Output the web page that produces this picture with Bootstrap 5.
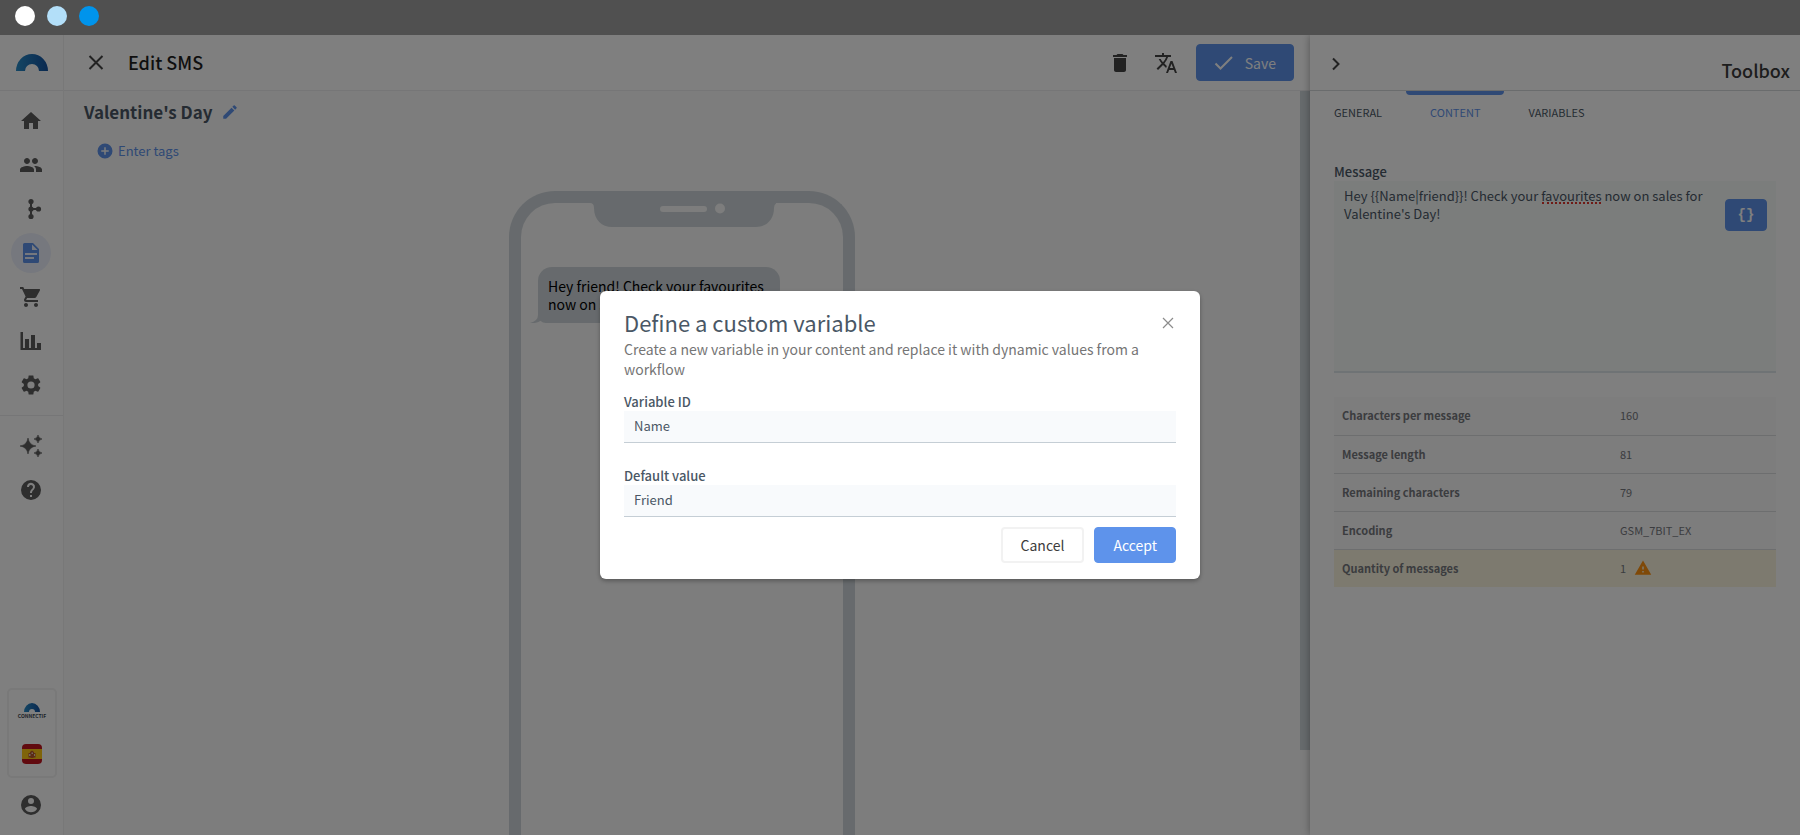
<!DOCTYPE html>
<html lang="en">
<head>
<meta charset="utf-8">
<meta name="viewport" content="width=device-width, initial-scale=1">
<title>Edit SMS</title>
<link href="https://cdn.jsdelivr.net/npm/bootstrap@5.3.0/dist/css/bootstrap.min.css" rel="stylesheet">
<style>
  :root { --brand: #5e93eb; --ink: #4a5765; --icon: #5c5c5c; --line: #ececee; --shell: #ced5da; }
  body { font-family: "Noto Sans CJK SC", "Noto Sans", sans-serif; font-size: 13px; line-height: 18px; color: var(--ink); }
  svg { display: block; fill: currentColor; }
  .window-bar { background: #505050; height: 35px; padding-left: 15px; gap: 12px; }
  .dot { width: 20px; height: 20px; border-radius: 50%; }
  .head { height: 56px; border-bottom: 1px solid var(--line); flex: none; }
  .rail { width: 64px; flex: none; border-right: 1px solid #f0f0f0; color: var(--icon); background: #fff; }
  .rail a { color: inherit; width: 40px; height: 40px; margin-right: 1px; border-radius: 50%; display: flex; align-items: center; justify-content: center; }
  .rail a.active { background: #edf1fc; color: var(--brand); }
  .rail-list { gap: 4px; padding: 10px 0; }
  .rail-more { border-top: 1px solid var(--line); }
  .account-box { width: 50px; height: 90px; border: 2px solid #f2f2f2; border-radius: 5px; }
  .account-link { margin-top: 7px; margin-bottom: 10px; }
  .icon-btn { border: 0; background: none; padding: 0; color: #444; }
  .page-title { font-size: 18px; line-height: 24px; font-weight: 500; color: #1f1f1f; }
  .head .page-title { padding-bottom: 2px; }
  .toolbox-title { color: #3a3a3a; margin: 16px 10px 0 0; }
  .actions { gap: 22px; }
  .save-btn { height: 37px; padding: 0 17px 0 15px; gap: 9px; margin-left: -4px; }
  .btn-brand { --bs-btn-bg: var(--brand); --bs-btn-color: #fff; --bs-btn-border-color: var(--brand); --bs-btn-hover-bg: #4b82df; --bs-btn-hover-color: #fff; --bs-btn-border-radius: 4px; --bs-btn-font-size: 14px; --bs-btn-line-height: 20px; }
  .canvas { background: #fafafa; overflow: hidden; }
  .track { width: 10px; height: 659px; max-height: 89%; background: var(--shell); flex: none; }
  .sms-name { font-size: 17px; line-height: 26px; font-weight: 700; }
  .brand-link { color: var(--brand); text-decoration: none; font-size: 13px; }
  .tags { padding: 17px 0 0 32px; }
  .phone { width: 346px; border: 12px solid var(--shell); border-bottom: 0; border-radius: 46px 46px 0 0; margin-top: 27px; }
  .notch { color: var(--shell); }
  .bubble { width: 242px; margin: 40px 0 0 17px; padding: 10px; background: var(--shell); border-radius: 14px 14px 14px 8px; font-size: 14px; color: #000; }
  .bubble-tail { position: absolute; left: -8px; bottom: 0; color: var(--shell); }
  .toolbox { width: 490px; flex: none; background: #fff; box-shadow: 0 0 8px rgba(0,0,0,.35); z-index: 1; }
  .toolbox .head { border-color: #d4d8da; }
  .tab { font-size: 11px; line-height: 16px; padding: 13px 24px 15px; color: var(--ink); text-decoration: none; position: relative; }
  .tab.active { color: var(--brand); }
  .tab.active::before { content: ""; position: absolute; inset: 0 0 auto; height: 4px; background: var(--brand); border-radius: 0 0 4px 4px; }
  .field-label { font-size: 13px; line-height: 18px; font-weight: 500; display: block; }
  .field { border: 0; border-bottom: 1px solid #c5ced5; border-radius: 0; background: #f8fafc; color: var(--ink); font-size: 13px; line-height: 18px; padding: 6px 10px 7px; }
  .message { height: 192px; resize: none; background: #f6faf9; border-bottom: 2px solid #dfe6ea; padding: 6px 64px 6px 10px; }
  .typo-mark { position: absolute; left: 208px; top: 21px; width: 59px; border-top: 2px dotted #e0342c; }
  .var-btn { position: absolute; right: 9px; top: 18px; width: 42px; height: 32px; padding: 0; font-family: "Liberation Mono", monospace; font-weight: 700; }
  .stats { font-size: 11px; line-height: 17px; background: #fafafa; color: #76797e; width: 100%; }
  .stats th, .stats td { height: 38px; padding: 0 8px; border-bottom: 1px solid #dadcdf; }
  .stats th { width: 278px; font-weight: 700; }
  .stats tr:last-child > * { border: 0; background: #faf4df; }
  .warn { color: #ff9210; }
  .overlay { position: absolute; z-index: 10; background: rgba(0,0,0,.5); }
  .dialog { width: 600px; max-width: 100%; background: #fff; border-radius: 6px; padding: 16px 24px; box-shadow: 0 2px 4px rgba(0,0,0,.3); }
  .dialog-title { font-size: 22px; line-height: 30px; font-weight: 400; margin: 0 0 2px; }
  .dialog-text { font-size: 14px; line-height: 20px; color: #757575; margin: 0 0 14px; }
  .dialog-actions { gap: 10px; padding-top: 10px; }
  .dialog .btn { height: 36px; padding: 0 18px; font-size: 14px; }
  .btn-plain { border: 2px solid #f2f2f2; border-radius: 4px; color: #3c3c3c; background: #fff; }
</style>
</head>
<body>
<div class="vh-100 d-flex flex-column overflow-hidden">
  <div class="window-bar d-flex align-items-center flex-shrink-0 pb-1">
    <span class="dot bg-white"></span>
    <span class="dot" style="background:#b3dff9"></span>
    <span class="dot" style="background:#0094ec"></span>
  </div>

  <div class="flex-grow-1 d-flex position-relative overflow-hidden">
    <nav class="rail d-flex flex-column align-items-center" aria-label="Main">
      <div class="head w-100 d-flex align-items-center justify-content-center">
        <svg width="32" height="17" viewBox="0 0 32 17"><defs><linearGradient id="arc"><stop offset="0" stop-color="#288cc8"/><stop offset="1" stop-color="#1452a0"/></linearGradient></defs><path fill="url(#arc)" d="M0 17a16 17 0 0 1 32 0h-9a7 7 0 0 0-14 0z"/></svg>
      </div>
      <div class="rail-list d-flex flex-column">
        <a href="#" aria-label="Home"><svg width="24" height="24" viewBox="0 0 24 24"><path d="M10 20v-6h4v6h5v-8h3L12 3 2 12h3v8z"/></svg></a>
        <a href="#" aria-label="Contacts"><svg width="24" height="24" viewBox="0 0 24 24"><path d="M16 11c1.66 0 2.99-1.34 2.99-3S17.66 5 16 5s-3 1.34-3 3 1.34 3 3 3zm-8 0c1.66 0 2.99-1.34 2.99-3S9.66 5 8 5 5 6.34 5 8s1.34 3 3 3zm0 2c-2.33 0-7 1.17-7 3.5V19h14v-2.5c0-2.33-4.67-3.5-7-3.5zm8 0c-.29 0-.62.02-.97.05 1.16.84 1.97 1.97 1.97 3.45V19h6v-2.5c0-2.33-4.67-3.5-7-3.5z"/></svg></a>
        <a href="#" aria-label="Workflows"><svg width="24" height="24" viewBox="0 0 24 24"><path d="M11 4h2v7h6v2h-6v7h-2z"/><circle cx="12" cy="4.500" r="2.600"/><circle cx="12" cy="12" r="2.600"/><circle cx="12" cy="19.500" r="2.600"/><circle cx="19.500" cy="12" r="2.600"/></svg></a>
        <a href="#" class="active" aria-label="Content"><svg width="24" height="24" viewBox="0 0 24 24"><path fill-rule="evenodd" d="M5.500 2H14l6 6v12.500a1.500 1.500 0 0 1-1.500 1.500h-13A1.500 1.500 0 0 1 4 20.500v-17A1.500 1.500 0 0 1 5.500 2zM13 3.500V9h5.500zM6 12v2h12v-2zM6 16v2h9v-2z"/></svg></a>
        <a href="#" aria-label="Store"><svg width="24" height="24" viewBox="0 0 24 24"><path d="M7 18c-1.100 0-1.990.9-1.990 2S5.900 22 7 22s2-.9 2-2-.9-2-2-2zM1 2v2h2l3.600 7.590-1.350 2.450c-.16.28-.25.61-.25.96 0 1.100.9 2 2 2h12v-2H7.420c-.14 0-.25-.11-.25-.25l.03-.12.900-1.630h7.450c.75 0 1.410-.41 1.750-1.030l3.580-6.490A1 1 0 0 0 20 4H5.210l-.94-2zm16 16c-1.100 0-1.990.9-1.990 2s.89 2 1.990 2 2-.9 2-2-.9-2-2-2z"/></svg></a>
        <a href="#" aria-label="Reports"><svg width="24" height="24" viewBox="0 0 24 24"><path d="M1.500 3h2.500v16h2V10h4v9h2V6h4v13h2v-5h4v7h-20.500z"/></svg></a>
        <a href="#" aria-label="Settings"><svg width="24" height="24" viewBox="0 0 24 24"><path d="M19.140 12.940c.04-.3.060-.61.060-.94 0-.32-.02-.64-.07-.94l2.030-1.580c.18-.14.23-.41.120-.61l-1.920-3.320c-.12-.22-.37-.29-.59-.22l-2.390.96c-.5-.38-1.030-.7-1.620-.94L14.400 2.810c-.04-.24-.24-.41-.48-.41h-3.840c-.24 0-.43.17-.47.41L9.250 5.350c-.59.24-1.130.57-1.620.94L5.240 5.330c-.22-.08-.47 0-.59.22L2.740 8.870c-.12.21-.08.47.12.61l2.030 1.580c-.05.3-.09.63-.09.94s.02.640.07.940l-2.030 1.580c-.18.14-.23.41-.12.61l1.920 3.320c.12.22.37.29.59.22l2.390-.96c.5.38 1.030.7 1.620.94l.36 2.540c.05.24.24.41.48.41h3.840c.24 0 .44-.17.470-.41l.36-2.540c.59-.24 1.130-.56 1.620-.94l2.390.96c.22.08.47 0 .59-.22l1.920-3.320c.12-.22.07-.47-.12-.61l-2.010-1.580zM12 15.600a3.600 3.600 0 1 1 0-7.200 3.600 3.600 0 0 1 0 7.200z"/></svg></a>
      </div>
      <div class="rail-more rail-list w-100 d-flex flex-column align-items-center">
        <a href="#" aria-label="Assistant"><svg width="24" height="24" viewBox="0 0 24 24"><path d="M9 4q1 7 8 8-7 1-8 8-1-7-8-8 7-1 8-8zM19 1q.7 3.300 4 4-3.300.7-4 4-.7-3.300-4-4 3.300-.7 4-4zM19 15q.7 3.300 4 4-3.300.7-4 4-.7-3.300-4-4 3.300-.7 4-4z" stroke="currentColor" stroke-width=".6"/></svg></a>
        <a href="#" aria-label="Help"><svg width="24" height="24" viewBox="0 0 24 24"><path d="M12 2a10 10 0 1 0 0 20 10 10 0 0 0 0-20zm1 17h-2v-2h2zm2.070-7.750-.9.920C13.450 12.900 13 13.500 13 15h-2v-.5c0-1.100.45-2.100 1.170-2.830l1.240-1.260A2 2 0 1 0 10 9H8a4 4 0 1 1 7.070 2.250z"/></svg></a>
      </div>
      <div class="mt-auto account-box d-flex flex-column align-items-center justify-content-around">
        <svg width="30" height="18" viewBox="0 0 30 18"><path fill="url(#arc)" d="M7 10a8 9 0 0 1 16 0h-5a3 3 0 0 0-6 0z"/><text x="15" y="16" text-anchor="middle" font-size="5" font-weight="700" fill="#3c4650">CONNECTIF</text></svg>
        <svg width="20" height="20" viewBox="0 0 20 20" role="img" aria-label="Spain"><rect width="20" height="20" rx="4" fill="#c2141f"/><path fill="#ffc814" d="M0 5h20v10H0z"/><path fill="#b9572a" d="M6.500 9h1.500V8L10 6.500 12 8v1h1.500v4.500H12l-1 .5H9l-1-.5H6.500z"/><path fill="#e6cfc0" d="M7 10h1.500v2H7zM9.500 8.500H11V10H9.500zM12 10h1v2h-1z"/></svg>
      </div>
      <a href="#" class="account-link flex-shrink-0" aria-label="Account"><svg width="24" height="24" viewBox="0 0 24 24"><path d="M12 2a10 10 0 1 0 0 20 10 10 0 0 0 0-20zm0 3a3 3 0 1 1 0 6 3 3 0 0 1 0-6zm0 14.200a7.200 7.200 0 0 1-6-3.220c.03-1.990 4-3.080 6-3.080s5.970 1.090 6 3.080a7.200 7.200 0 0 1-6 3.220z"/></svg></a>
    </nav>

    <main class="flex-grow-1 d-flex flex-column">
      <header class="head bg-white d-flex align-items-center px-3">
        <button class="icon-btn ms-1" aria-label="Close editor"><svg width="24" height="24" viewBox="0 0 24 24"><path fill="none" stroke="currentColor" stroke-width="2" d="M5.500 5l13 13M18.500 5l-13 13"/></svg></button>
        <h1 class="page-title mb-0 ms-3 ps-1">Edit SMS</h1>
        <div class="actions ms-auto d-flex align-items-center">
          <button class="icon-btn" aria-label="Delete"><svg width="24" height="24" viewBox="0 0 24 24"><path d="M6 19c0 1.100.9 2 2 2h8c1.100 0 2-.9 2-2V7H6zM19 4h-3.500l-1-1h-5l-1 1H5v2h14z"/></svg></button>
          <button class="icon-btn" aria-label="Translate"><svg width="24" height="24" viewBox="0 0 24 24"><path d="M12.870 15.070l-2.540-2.510.03-.03A17.500 17.500 0 0 0 14.070 6H17V4h-7V2H8v2H1v1.990h11.170C11.500 7.920 10.440 9.750 9 11.350 8.070 10.320 7.300 9.190 6.690 8h-2c.73 1.630 1.730 3.170 2.980 4.560l-5.090 5.020L4 19l5-5 3.110 3.110zM18.500 10h-2L12 22h2l1.120-3h4.750L21 22h2zm-2.620 7l1.620-4.330L19.120 17z"/></svg></button>
          <button class="btn btn-brand save-btn d-flex align-items-center"><svg width="24" height="20" viewBox="0 0 24 20"><path fill="none" stroke="currentColor" stroke-width="2" d="M3.500 10.500l5 5L20 4"/></svg>Save</button>
        </div>
      </header>
      <div class="canvas flex-grow-1 d-flex">
        <div class="flex-grow-1 d-flex flex-column">
          <div class="d-flex align-items-center gap-2 mt-2 px-3 ms-1">
            <h2 class="sms-name mb-0">Valentine's Day</h2>
            <button class="icon-btn brand-link" aria-label="Rename"><svg width="18" height="18" viewBox="0 0 24 24"><path d="M3 17.250V21h3.750L17.810 9.940l-3.750-3.750zM20.710 7.040a1 1 0 0 0 0-1.410l-2.340-2.340a1 1 0 0 0-1.410 0l-1.830 1.830 3.750 3.750z"/></svg></button>
          </div>
          <div class="tags"><a href="#" class="brand-link d-inline-flex align-items-center"><svg class="me-1" width="18" height="18" viewBox="0 0 24 24"><path d="M12 2a10 10 0 1 0 0 20 10 10 0 0 0 0-20zm5 11h-4v4h-2v-4H7v-2h4V7h2v4h4z"/></svg>Enter tags</a></div>
          <div class="phone flex-grow-1 align-self-center">
            <svg class="notch mx-auto" width="188" height="24" viewBox="0 0 188 24"><path d="M2 0h188q-4 0-4 5c0 12-8 19-18 19H24C14 24 6 17 6 5q0-5-4-5z"/><rect x="72" y="3" width="47" height="6" rx="3" fill="#fafafa"/><circle cx="132" cy="5.500" r="5" fill="#fafafa"/></svg>
            <div class="bubble position-relative">Hey friend! Check your favourites now on sales for Valentine's Day!<svg class="bubble-tail" width="16" height="18" viewBox="0 0 16 18"><path d="M8 0v10q0 6-8 8 6 1 12-3l4 3V0z"/></svg></div>
          </div>
        </div>
        <div class="track"></div>
      </div>
    </main>

    <aside class="toolbox d-flex flex-column">
      <div class="head d-flex align-items-center justify-content-between">
        <button class="icon-btn ms-3" aria-label="Collapse"><svg width="20" height="20" viewBox="0 0 20 20"><path fill="none" stroke="currentColor" stroke-width="2" d="M7 5.500l5.500 5.500L7 16.500"/></svg></button>
        <h2 class="page-title toolbox-title">Toolbox</h2>
      </div>
      <nav class="d-flex" aria-label="Toolbox">
        <a href="#" class="tab">GENERAL</a><a href="#" class="tab active">CONTENT</a><a href="#" class="tab">VARIABLES</a>
      </nav>
      <div class="px-4 pt-4 mt-1">
        <label class="field-label" for="message">Message</label>
        <div class="position-relative">
          <textarea id="message" class="field message w-100 d-block" spellcheck="false">Hey {{Name|friend}}! Check your favourites now on sales for Valentine's Day!</textarea>
          <span class="typo-mark"></span>
          <button class="btn btn-brand var-btn">{}</button>
        </div>
        <table class="stats mt-4">
          <tr><th scope="row">Characters per message</th><td>160</td></tr>
          <tr><th scope="row">Message length</th><td>81</td></tr>
          <tr><th scope="row">Remaining characters</th><td>79</td></tr>
          <tr><th scope="row">Encoding</th><td>GSM_7BIT_EX</td></tr>
          <tr><th scope="row">Quantity of messages</th><td><span class="d-flex align-items-center gap-2">1<svg class="warn" width="18" height="18" viewBox="0 0 24 24"><path d="M1 21h22L12 2zm12-3h-2v-2h2zm0-4h-2v-4h2z"/></svg></span></td></tr>
        </table>
      </div>
    </aside>

    <div class="overlay top-0 start-0 w-100 h-100 d-flex align-items-center justify-content-center">
      <form class="dialog" role="dialog" aria-labelledby="dialog-title">
        <div class="d-flex align-items-center justify-content-between">
          <h2 class="dialog-title" id="dialog-title">Define a custom variable</h2>
          <button type="button" class="icon-btn" aria-label="Close"><svg width="16" height="16" viewBox="0 0 16 16"><path fill="none" stroke="#8c8c8c" stroke-width="1.200" d="M3 3l10 10M13 3L3 13"/></svg></button>
        </div>
        <p class="dialog-text">Create a new variable in your content and replace it with dynamic values from a workflow</p>
        <label class="field-label" for="variable-id">Variable ID</label>
        <input id="variable-id" class="field w-100 d-block mb-4" value="Name">
        <label class="field-label" for="default-value">Default value</label>
        <input id="default-value" class="field w-100 d-block" value="Friend">
        <div class="dialog-actions d-flex justify-content-end">
          <button type="button" class="btn btn-plain">Cancel</button>
          <button type="submit" class="btn btn-brand">Accept</button>
        </div>
      </form>
    </div>
  </div>
</div>
<script src="https://cdn.jsdelivr.net/npm/bootstrap@5.3.0/dist/js/bootstrap.bundle.min.js"></script>
</body>
</html>
